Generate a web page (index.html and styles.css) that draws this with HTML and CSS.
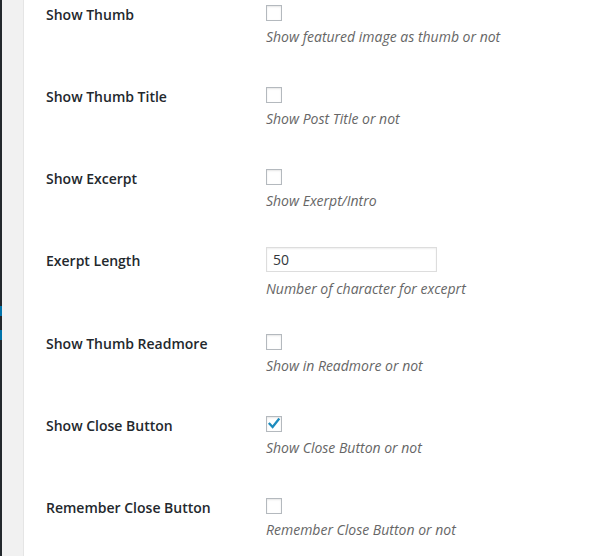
FILE: index.html
```html
<!DOCTYPE html>
<html>
<head>
<meta charset="utf-8">
<link rel="stylesheet" href="styles.css">
</head>
<body>
<div class="menu">
  <div class="menu-mark"></div>
  <div class="menu-mark"></div>
</div>
<main class="panel">
  <div class="form-table">
    <div class="row">
      <div class="label">Show Thumb</div>
      <div class="field">
        <span class="check"></span>
        <p class="description">Show featured image as thumb or not</p>
      </div>
    </div>
    <div class="row">
      <div class="label">Show Thumb Title</div>
      <div class="field">
        <span class="check"></span>
        <p class="description">Show Post Title or not</p>
      </div>
    </div>
    <div class="row">
      <div class="label">Show Excerpt</div>
      <div class="field">
        <span class="check"></span>
        <p class="description">Show Exerpt/Intro</p>
      </div>
    </div>
    <div class="row row-text">
      <div class="label">Exerpt Length</div>
      <div class="field field-text">
        <span class="text-input">50</span>
        <p class="description">Number of character for exceprt</p>
      </div>
    </div>
    <div class="row">
      <div class="label">Show Thumb Readmore</div>
      <div class="field">
        <span class="check"></span>
        <p class="description">Show in Readmore or not</p>
      </div>
    </div>
    <div class="row">
      <div class="label">Show Close Button</div>
      <div class="field">
        <span class="check checked">
          <svg viewBox="0 0 16 16" width="16" height="16"><path d="M3.6 7.9 L6.6 11 L12.6 3.4" fill="none" stroke="#1e8cbe" stroke-width="2.3" stroke-linecap="square" stroke-linejoin="miter"/></svg>
        </span>
        <p class="description">Show Close Button or not</p>
      </div>
    </div>
    <div class="row">
      <div class="label">Remember Close Button</div>
      <div class="field">
        <span class="check"></span>
        <p class="description">Remember Close Button or not</p>
      </div>
    </div>
  </div>
</main>
</body>
</html>
```
FILE: styles.css
```css
html, body {
  margin: 0;
  padding: 0;
  height: 100%;
}
body {
  background: #f1f1f1;
  display: flex;
  font-family: "Open Sans", "Liberation Sans", sans-serif;
  font-size: 14px;
  color: #444;
  overflow: hidden;
}
.menu {
  width: 2px;
  background: #23282d;
  padding-top: 306px;
  display: flex;
  flex-direction: column;
  gap: 14px;
  flex-shrink: 0;
}
.menu-mark {
  height: 10px;
  background: #0073aa;
}
.panel {
  margin-left: 21px;
  flex: 1;
  background: #fff;
  border-left: 1px solid #e5e5e5;
  padding-left: 22px;
}
.form-table {
  margin-top: -14px;
}
.row {
  display: flex;
  height: 82px;
}
.row-text {
  height: 83px;
}
.label {
  width: 220px;
  flex-shrink: 0;
  padding-top: 20px;
  line-height: 18px;
  font-weight: 600;
  color: #23282d;
}
.field {
  padding-top: 19px;
  display: flex;
  flex-direction: column;
  align-items: flex-start;
}
.field-text {
  padding-top: 15px;
}
.check {
  width: 16px;
  height: 16px;
  box-sizing: border-box;
  border: 1px solid #b4b9be;
  background: #fff;
  box-shadow: inset 0 1px 2px rgba(0,0,0,0.1);
  display: flex;
  align-items: center;
  justify-content: center;
}
.check svg {
  flex-shrink: 0;
}
.text-input {
  width: 171px;
  height: 25px;
  box-sizing: border-box;
  border: 1px solid #ddd;
  box-shadow: inset 0 1px 2px rgba(0,0,0,0.07);
  padding: 0 6px;
  line-height: 23px;
  color: #32373c;
}
.description {
  margin: 6px 0 0;
  line-height: 20px;
  font-style: italic;
  color: #666;
}
.field-text .description {
  margin-top: 7px;
}
```
